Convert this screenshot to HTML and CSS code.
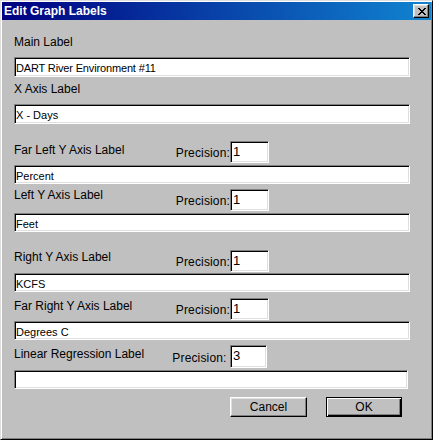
FILE: index.html
```html
<!DOCTYPE html>
<html>
<head>
<meta charset="utf-8">
<link rel="stylesheet" href="styles.css">
</head>
<body>
<div class="window">
  <div class="titlebar">
    <span class="title">Edit Graph Labels</span>
    <span class="close">
      <svg width="8" height="7" viewBox="0 0 8 7" shape-rendering="crispEdges">
        <rect x="0" y="0" width="2" height="1" fill="#000"/>
        <rect x="6" y="0" width="2" height="1" fill="#000"/>
        <rect x="1" y="1" width="2" height="1" fill="#000"/>
        <rect x="5" y="1" width="2" height="1" fill="#000"/>
        <rect x="2" y="2" width="4" height="1" fill="#000"/>
        <rect x="3" y="3" width="2" height="1" fill="#000"/>
        <rect x="2" y="4" width="4" height="1" fill="#000"/>
        <rect x="1" y="5" width="2" height="1" fill="#000"/>
        <rect x="5" y="5" width="2" height="1" fill="#000"/>
        <rect x="0" y="6" width="2" height="1" fill="#000"/>
        <rect x="6" y="6" width="2" height="1" fill="#000"/>
      </svg>
    </span>
  </div>
  <div class="content">
    <div class="lbl m-main">Main Label</div>
    <div class="field f-1">DART River Environment #11</div>
    <div class="lbl m-x">X Axis Label</div>
    <div class="field f-2">X - Days</div>

    <div class="hdr h-3">
      <span class="hlbl">Far Left Y Axis Label</span>
      <span class="prec">Precision:</span>
      <span class="pbox">1</span>
    </div>
    <div class="field f-3">Percent</div>

    <div class="hdr h-4">
      <span class="hlbl">Left Y Axis Label</span>
      <span class="prec">Precision:</span>
      <span class="pbox">1</span>
    </div>
    <div class="field f-4">Feet</div>

    <div class="hdr h-5">
      <span class="hlbl">Right Y Axis Label</span>
      <span class="prec">Precision:</span>
      <span class="pbox">1</span>
    </div>
    <div class="field f-5">KCFS</div>

    <div class="hdr h-6">
      <span class="hlbl">Far Right Y Axis Label</span>
      <span class="prec">Precision:</span>
      <span class="pbox">1</span>
    </div>
    <div class="field f-6">Degrees C</div>

    <div class="hdr h-7">
      <span class="hlbl">Linear Regression Label</span>
      <span class="prec">Precision: </span>
      <span class="pbox">3</span>
    </div>
    <div class="field f-7"></div>

    <div class="buttons">
      <div class="btn">Cancel</div>
      <div class="btn default">OK</div>
    </div>
  </div>
</div>
</body>
</html>
```

FILE: styles.css
```css
* { box-sizing: border-box; }
html, body { margin: 0; padding: 0; background: #c0c0c0; }
body { font-family: "Liberation Sans", Arial, sans-serif; color: #000; }

.window {
  width: 433px;
  height: 440px;
  background: #c0c0c0;
  border: 1px solid;
  border-color: #dfdfdf #000 #000 #dfdfdf;
  box-shadow: inset 1px 1px #fff, inset -1px -1px #808080;
  padding: 1px;
  display: flex;
  flex-direction: column;
}

.titlebar {
  height: 18px;
  background: linear-gradient(to right, #000080, #1084d0);
  display: flex;
  align-items: flex-start;
  padding-left: 2px;
  padding-right: 2px;
}
.title {
  flex: 1;
  color: #fff;
  font-weight: bold;
  font-size: 12px;
  line-height: 18px;
}
.close {
  margin-top: 2px;
  width: 16px;
  height: 14px;
  background: #c0c0c0;
  border: 1px solid;
  border-color: #fff #000 #000 #fff;
  box-shadow: inset -1px -1px #808080, inset 1px 1px #dfdfdf;
  display: flex;
  align-items: center;
  justify-content: center;
  padding-left: 1px;
}
.close svg { display: block; }

.content {
  padding-left: 12px;
  display: flex;
  flex-direction: column;
  align-items: flex-start;
}

.lbl, .hlbl, .prec {
  font-size: 12px;
  line-height: 14px;
  white-space: pre;
}
.prec { letter-spacing: 0.15px; }

.field {
  width: 396px;
  height: 19px;
  background: #fff;
  border: 1px solid;
  border-color: #808080 #fff #fff #808080;
  box-shadow: inset 1px 1px #000, inset -1px -1px #dfdfdf;
  font-size: 11px;
  line-height: 16px;
  padding: 2px 0 0 1px;
  overflow: hidden;
  white-space: nowrap;
}
.f-1 { letter-spacing: -0.15px; }

.m-main { margin-top: 15px; }
.f-1 { margin-top: 8px; height: 20px; }
.m-x { margin-top: 5px; }
.f-2 { margin-top: 8px; height: 20px; }

.hdr {
  width: 255px;
  height: 22px;
  display: grid;
  grid-template-columns: 1fr auto 39px;
  align-items: start;
}
.hlbl { margin-top: 2px; }
.prec { margin-top: 5px; }
.pbox {
  height: 22px;
  background: #fff;
  border: 1px solid;
  border-color: #808080 #fff #fff #808080;
  box-shadow: inset 1px 1px #000, inset -1px -1px #dfdfdf;
  font-size: 13px;
  line-height: 16px;
  padding: 2px 0 0 2px;
}

.h-3 { margin-top: 17px; }
.f-3 { margin-top: 2px; }
.h-4 { margin-top: 5px; }
.h-4 .hlbl { margin-top: -1px; }
.f-4 { margin-top: 2px; }
.h-5 { margin-top: 18px; }
.h-5 .hlbl { margin-top: 0; }
.f-5 { margin-top: 1px; }
.h-6 { margin-top: 6px; }
.h-6 .hlbl { margin-top: 1px; }
.f-6 { margin-top: 1px; }
.h-7 { margin-top: 5px; height: 23px; }
.h-7 .hlbl { margin-top: 2px; }
.h-7 .prec { margin-top: 6px; }
.h-7 .pbox { width: 37px; height: 23px; }
.f-7 { margin-top: 2px; width: 394px; }

.buttons {
  margin-top: 8px;
  margin-left: 216px;
  display: flex;
  gap: 19px;
}
.btn {
  width: 77px;
  height: 20px;
  background: #c0c0c0;
  border: 1px solid;
  border-color: #fff #000 #000 #fff;
  box-shadow: inset -1px -1px #808080, inset 1px 1px #dfdfdf;
  font-size: 12px;
  line-height: 18px;
  text-align: center;
}
.btn.default {
  width: 76px;
  border-color: #000;
  box-shadow: inset 1px 1px #fff, inset -1px -1px #000, inset -2px -2px #808080;
}
```
